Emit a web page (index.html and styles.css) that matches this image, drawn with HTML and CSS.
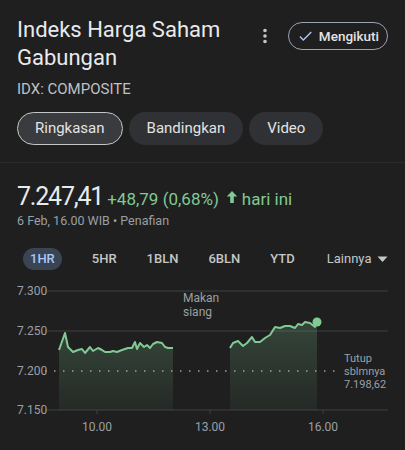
FILE: index.html
```html
<!DOCTYPE html>
<html lang="id">
<head>
<meta charset="UTF-8" />
<meta name="viewport" content="width=device-width, initial-scale=1" />
<title>Indeks Harga Saham Gabungan</title>
<link rel="stylesheet" href="styles.css">
</head>
<body>

<div class="header">
  <div class="title-block">
    <h1 class="title">Indeks Harga Saham Gabungan</h1>
    <div class="ticker">IDX: COMPOSITE</div>
  </div>
  <div class="actions">
    <svg class="kebab" width="6" height="16" viewBox="0 0 6 16">
      <circle cx="3" cy="2.5" r="1.8" fill="#c4c7c5"/>
      <circle cx="3" cy="8" r="1.8" fill="#c4c7c5"/>
      <circle cx="3" cy="13.5" r="1.8" fill="#c4c7c5"/>
    </svg>
    <button class="follow">
      <svg width="18" height="18" viewBox="0 0 24 24"><path d="M9 16.17L4.83 12l-1.42 1.41L9 19 21 7l-1.41-1.41z" fill="#a8c7fa"/></svg>
      Mengikuti
    </button>
  </div>
</div>

<div class="tabs">
  <div class="tab active">Ringkasan</div>
  <div class="tab">Bandingkan</div>
  <div class="tab">Video</div>
</div>

<div class="quote">
  <div class="price-row">
    <span class="price">7.247,41</span>
    <span class="change">+48,79 (0,68%)</span>
    <svg class="up" width="12" height="14" viewBox="0 0 12 14"><path d="M6 1L0.8 6.4h3.4V13h3.6V6.4h3.4z" fill="#81c995"/></svg>
    <span class="change">hari ini</span>
  </div>
  <div class="meta">6 Feb, 16.00 WIB • Penafian</div>
</div>

<div class="ranges">
  <span class="range active">1HR</span>
  <span class="range">5HR</span>
  <span class="range">1BLN</span>
  <span class="range">6BLN</span>
  <span class="range">YTD</span>
  <span class="range more">Lainnya
    <svg width="11" height="7" viewBox="0 0 11 7"><path d="M0.5 0.5h10L5.5 6z" fill="#c4c7c5"/></svg>
  </span>
</div>

<svg class="chart" width="405" height="170" viewBox="0 0 405 170">
  <defs>
    <linearGradient id="fill" x1="0" y1="0" x2="0" y2="1">
      <stop offset="0" stop-color="#81c995" stop-opacity="0.22"/>
      <stop offset="1" stop-color="#81c995" stop-opacity="0.06"/>
    </linearGradient>
  </defs>

  <g class="grid">
    <line x1="45" y1="11" x2="388" y2="11"/>
    <line x1="45" y1="51" x2="388" y2="51"/>
    <line x1="45" y1="130" x2="388" y2="130"/>
    <line x1="97" y1="130" x2="97" y2="134"/>
    <line x1="210" y1="130" x2="210" y2="134"/>
    <line x1="323" y1="130" x2="323" y2="134"/>
  </g>

  <polygon class="area" points="59,130 59,70 65,53 68,67 73,72 78,70 82,69 85,73 90,67 93,71 98,68 102,70 105,72 110,72 113,71 117,72 122,70 128,68 132,68 135,62 137,69 140,63 144,67 147,65 150,68 153,64 157,62 162,63 165,67 168,68 173,68 173,130"/>
  <polygon class="area" points="230,130 230,68 233,63 238,61 243,66 247,63 252,57 255,62 260,62 265,58 270,55 275,47 280,48 285,46 290,46 295,48 298,44 302,45 305,42 310,43 315,47 317,42 317,130"/>

  <line class="close-line" x1="45" y1="91" x2="340" y2="91"/>

  <polyline class="line" points="59,70 65,53 68,67 73,72 78,70 82,69 85,73 90,67 93,71 98,68 102,70 105,72 110,72 113,71 117,72 122,70 128,68 132,68 135,62 137,69 140,63 144,67 147,65 150,68 153,64 157,62 162,63 165,67 168,68 173,68"/>
  <polyline class="line" points="230,68 233,63 238,61 243,66 247,63 252,57 255,62 260,62 265,58 270,55 275,47 280,48 285,46 290,46 295,48 298,44 302,45 305,42 310,43 315,47 317,42"/>
  <circle cx="317" cy="42" r="4.5" fill="#81c995"/>

  <g class="axis">
    <text x="17" y="15">7.300</text>
    <text x="17" y="55">7.250</text>
    <text x="17" y="95">7.200</text>
    <text x="17" y="134">7.150</text>
    <text x="97" y="151" text-anchor="middle">10.00</text>
    <text x="210" y="151" text-anchor="middle">13.00</text>
    <text x="323" y="151" text-anchor="middle">16.00</text>
    <text x="183" y="22">Makan</text>
    <text x="183" y="36">siang</text>
  </g>
  <g class="axis small">
    <text x="344" y="82">Tutup</text>
    <text x="344" y="95">sblmnya</text>
    <text x="344" y="108">7.198,62</text>
  </g>
</svg>

</body>
</html>
```

FILE: styles.css
```css
body {
  margin: 0;
  background-color: #1f1f1f;
  color: #e3e3e3;
  font-family: Roboto, "Liberation Sans", sans-serif;
  width: 405px;
  height: 450px;
  overflow: hidden;
}
.header {
  display: flex;
  justify-content: space-between;
  align-items: flex-start;
  padding: 16px 17px 0 17px;
}
.title {
  margin: 0;
  font-size: 22px;
  line-height: 28px;
  font-weight: 400;
  color: #e8eaed;
  width: 220px;
}
.ticker {
  margin-top: 7px;
  font-size: 15px;
  line-height: 20px;
  color: #bdc1c6;
}
.actions {
  display: flex;
  align-items: center;
  gap: 20px;
  margin-top: 6px;
}
.kebab {
  display: block;
}
.follow {
  display: flex;
  align-items: center;
  gap: 5px;
  height: 28px;
  width: 100px;
  padding: 0 8px 0 8px;
  box-sizing: border-box;
  background: transparent;
  border: 1.5px solid #9aa3b2;
  border-radius: 14px;
  color: #e3e3e3;
  font-family: inherit;
  font-size: 13.5px;
  font-weight: 500;
}
.tabs {
  display: flex;
  gap: 6px;
  padding: 13px 17px 17px 17px;
  border-bottom: 1px solid #2a2a2a;
}
.tab {
  height: 33px;
  line-height: 33px;
  padding: 0 18px;
  border-radius: 17px;
  background-color: #303134;
  font-size: 15px;
  color: #e3e3e3;
  box-sizing: border-box;
}
.tab.active {
  background-color: #3a3b3e;
  border: 1.5px solid #c4c7c5;
  line-height: 30px;
  padding: 0 17px;
}
.quote {
  padding: 18px 17px 0 17px;
}
.price-row {
  display: flex;
  align-items: baseline;
  gap: 4px;
  height: 32px;
}
.price {
  font-size: 25px;
  line-height: 32px;
  letter-spacing: -1.2px;
  color: #e8eaed;
}
.change {
  font-size: 17px;
  color: #81c995;
}
.up {
  align-self: center;
  margin: 0 0 0 3px;
}
.meta {
  font-size: 12.5px;
  line-height: 16px;
  color: #9aa0a6;
}
.ranges {
  display: flex;
  align-items: center;
  gap: 30px;
  padding: 19px 17px 0 23px;
}
.range {
  font-size: 13px;
  font-weight: 500;
  line-height: 22px;
  color: #c4c7c5;
}
.range.active {
  background-color: #3b4452;
  color: #a8c7fa;
  padding: 0 7px;
  border-radius: 11px;
}
.more {
  display: flex;
  align-items: center;
  gap: 6px;
  font-weight: 400;
  margin-left: 2px;
}
.chart {
  display: block;
  margin-top: 10px;
}
.grid line {
  stroke: #3c4043;
  stroke-width: 1;
}
.area {
  fill: url(#fill);
}
.close-line {
  stroke: #9aa0a6;
  stroke-width: 1.5;
  stroke-dasharray: 1.5 7.5;
}
.line {
  fill: none;
  stroke: #81c995;
  stroke-width: 2;
  stroke-linejoin: round;
}
.axis text {
  font-family: Roboto, "Liberation Sans", sans-serif;
  font-size: 12px;
  fill: #9aa0a6;
}
.axis.small text {
  font-size: 11px;
}
```
